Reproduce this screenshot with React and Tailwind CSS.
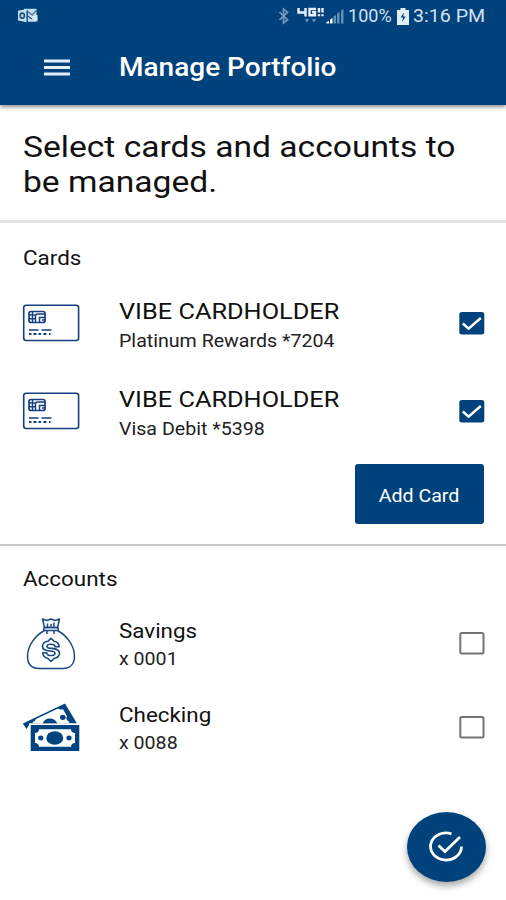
import React from "react";

const text = "block w-max origin-left scale-x-[1.12] whitespace-nowrap";

function CardIcon() {
  return (
    <svg className="h-[38px] w-[58px]" viewBox="0 0 58 38" fill="none" stroke="#153f80">
      <rect x="1.7" y="1.2" width="54.9" height="35.3" rx="2.5" strokeWidth="1.6" />
      <rect x="7" y="7.5" width="16" height="11" rx="2" strokeWidth="1.7" />
      <path d="M10.5 7.5v11M7 11h6M7 14.8h6M13.5 18.5V12q0-2 2-2h7.5M17.5 18.5v-5h5.5M20 16h3" strokeWidth="1.5" />
      <path d="M7 26h9.5M19.5 26h10" strokeWidth="1.5" />
      <path d="M7 30h2.5m2 0h3m2 0h2.5m2.5 0h3m2.5 0h1.5" strokeWidth="1.8" />
    </svg>
  );
}

function BagIcon() {
  return (
    <svg className="mt-0.5 h-[54px] w-[58px]" viewBox="0 0 58 54" fill="none" stroke="#174882" strokeWidth="1.5" strokeLinejoin="round">
      <path d="M22.5 13.5C14 18 5.5 28 5.5 39.500c0 8 4.500 12 12 12h23c7 0 12-4 12-12C52.500 28 44 18 35.500 13.500" />
      <path d="M22.5 10.5 20.5 2l4.500 1.500L29 2l4 1.500L37.500 2l-2 8.500zM25.500 10V6.500M29 9.500V7M32 9.500V5.500" />
      <rect x="21.8" y="10.5" width="14.4" height="3" rx="1" />
      <path d="M25 13.5v3.500M32 13.5v3.500" />
      <path d="M29 21.300l-3.200 3c-3.600.7-5.300 2.800-5.300 5 0 3.200 3 4.500 7.500 4.700 3.800.2 5 .9 5 2.200s-1.500 2.300-4 2.300-4-1-4.300-2.700h-4c.2 3 2.200 5 5.300 5.700l3 3 3-3c3.700-.7 5.500-2.900 5.500-5.200 0-3.300-3-4.600-7.700-4.900-3.500-.2-4.800-.8-4.800-2s1.400-2.200 3.900-2.200c2.600 0 4.100 1 4.300 2.600h4c-.2-3-2.200-4.900-5.200-5.500z" strokeWidth="1.6" />
    </svg>
  );
}

function CashIcon() {
  return (
    <svg className="h-[50px] w-[58px]" viewBox="0 0 58 50">
      <path d="M.8 20.5 43 .5 55 20.500H8L4.500 26z" fill="#004581" />
      <path d="M11.500 20.300 10.500 18.900a5 4 0 0 0 3.500-3L36 5.400a4.500 3.500 0 0 0 5 .8l4 7a4 3.500 0 0 0 1.500 5l1.300 2.200z" fill="#fff" />
      <path d="M20.500 20.800c2-7 12.500-7 15 0z" fill="#004581" />
      <ellipse cx="40.800" cy="14.300" rx="2.800" ry="2.600" fill="#004581" />
      <path d="M7 20.500H57V22H8.500v6H7z" fill="#fff" />
      <rect x="8.7" y="22" width="48.6" height="26" fill="#004581" />
      <path d="M17 26.200h32a4 4 0 0 0 4 3.800v10a4 4 0 0 0-4 3.800H17a4 4 0 0 0-4-3.800V30a4 4 0 0 0 4-3.800z" fill="#fff" />
      <ellipse cx="32.8" cy="35" rx="8.5" ry="6.8" fill="#004581" />
      <ellipse cx="18.8" cy="35" rx="2.6" ry="2.4" fill="#004581" />
      <ellipse cx="47" cy="35" rx="2.6" ry="2.4" fill="#004581" />
    </svg>
  );
}

function Checkbox({ checked }) {
  return checked ? (
    <svg className="h-[23px] w-[26px]" viewBox="0 0 26 23">
      <rect x=".3" y="0" width="25" height="22.6" rx="2.5" fill="#00427c" />
      <path d="m3.800 11.500 5.800 5.200L21.800 6" fill="none" stroke="#fff" strokeWidth="2.5" />
    </svg>
  ) : (
    <svg className="h-[23px] w-[26px]" viewBox="0 0 26 23">
      <rect x="1.3" y="1" width="23.2" height="20.6" rx="1.5" fill="none" stroke="#737373" strokeWidth="2" />
    </svg>
  );
}

function Row({ icon, title, detail, checked, large, className }) {
  return (
    <div className={"flex items-center pl-[22px] pr-[21px] " + className}>
      <div className="flex w-[97px] shrink-0 items-center">{icon}</div>
      <div className={large ? "flex-1 pt-[5px]" : "flex-1 pt-[3px]"}>
        <span className={text + (large ? " text-[22.6px] leading-[30px]" : " text-[20px] leading-7")}>{title}</span>
        <span className={text + " text-[17.5px] leading-7 text-[#222]"}>{detail}</span>
      </div>
      <Checkbox checked={checked} />
    </div>
  );
}

function StatusBar() {
  return (
    <div className="flex h-8 items-center justify-between pl-[18px] pr-5 text-[#d3e0ee]">
      <svg className="h-4 w-5" viewBox="0 0 20 16">
        <path d="M6 .8h12.500v13H6z" fill="#c4dcec" />
        <path d="m9 3 5 4 5-5M14 7l6 4" fill="none" stroke="#43749f" strokeWidth="1.3" />
        <path d="M0 2.800 9 1v13.200L0 12.500z" fill="#c4dcec" />
        <ellipse cx="4.3" cy="7.7" rx="2.1" ry="2.6" fill="none" stroke="#16528a" strokeWidth="1.6" />
        <path d="M9.200 2.500V14M10 8l4 3" stroke="#16528a" strokeWidth="1.5" />
        <path d="m11 8 8.500 5.500V7z" fill="#dcebf5" />
      </svg>
      <div className="flex h-8 items-center">
        <svg className="h-[18px] w-[68px]" viewBox="0 0 68 18">
          <path d="m1.500 5 8 8L5.500 16V2l4 3.200-8 7.800" fill="none" stroke="#739abd" strokeWidth="1.7" />
          <path d="M20.500 1v4.500h7.500M27.500 1v8.500M38 2h-6.500v6.300h5.500V5.200h-3M41 1v4.500M44.500 1v4.500M41 7.200v2M44.500 7.200v2" fill="none" stroke="#e8f0f8" strokeWidth="2.4" />
          <path d="M27.500 12.500h3L29 15zM34.500 12.500h3L36 15z" fill="#5f91bb" stroke="#5f91bb" />
          <path d="M48.500 16.500v-1.500l2.500-1v2.500zM52 16.500v-4l2.500-1.500v5.500z" fill="#fff" />
          <path d="M55.500 16.500V9.500L58 8v8.500zM59 16.500V6.500L61.500 5v11.500zM63 16.500V3.500L65.500 2v14.500z" fill="#6190b6" />
        </svg>
        <span className="block w-[51px] pl-0.5 text-[17.5px] leading-8">
          <span className="block w-max origin-left scale-x-[1.03]">100%</span>
        </span>
        <svg className="h-[17px] w-3" viewBox="0 0 12 17">
          <path d="M3.500 0h5v2H12v15H0V2h3.500z" fill="#e3edf6" />
          <path d="M7 4.500 3.500 9.500H6L5 14l3.800-5.500H6.300z" fill="#064680" />
        </svg>
        <span className="block w-[77px] pl-1">
          <span className={text + " text-[17.5px] leading-8"}>3:16 PM</span>
        </span>
      </div>
    </div>
  );
}

export default function App() {
  return (
    <div className="relative h-[900px] w-[506px] overflow-hidden bg-white font-['Roboto','Noto_Sans',sans-serif] text-[#111]">
      <header className="relative h-[105px] bg-[#00427c] shadow-[0_2px_4px_rgba(0,0,0,0.45)]">
        <StatusBar />
        <div className="flex h-[72px] items-center pl-11 text-white">
          <svg className="h-[18px] w-[26px]" viewBox="0 0 26 18" fill="#e4effb">
            <rect y=".5" width="26" height="3" />
            <rect y="7" width="26" height="3" />
            <rect y="13.5" width="26" height="3" />
          </svg>
          <h1 className={text + " ml-[49px] text-[25px] font-medium leading-8"}>Manage Portfolio</h1>
        </div>
      </header>

      <section className="h-[118px] border-b-[3px] border-[#e4e4e4] pl-[23px] pt-6">
        <h2 className={text + " text-[30px] leading-[35px]"}>
          Select cards and accounts to
          <br />
          be managed.
        </h2>
      </section>

      <section className="h-[323px] border-b-2 border-[#c8c8c8] pt-[21px]">
        <h3 className={text + " ml-[23px] text-[20px] leading-7"}>Cards</h3>
        <Row className="mt-[7px] h-[88px]" large checked icon={<CardIcon />} title="VIBE CARDHOLDER" detail="Platinum Rewards *7204" />
        <Row className="h-[88px]" large checked icon={<CardIcon />} title="VIBE CARDHOLDER" detail="Visa Debit *5398" />
        <div className="mt-[9px] flex justify-end pr-[22px]">
          <button className="flex h-[60px] w-[129px] items-center justify-center rounded-[3px] bg-[#00427c] pt-1 text-[17.5px] text-white">
            <span className="block scale-x-[1.12] whitespace-nowrap">Add Card</span>
          </button>
        </div>
      </section>

      <section className="pt-[19px]">
        <h3 className={text + " ml-[23px] text-[20px] leading-7"}>Accounts</h3>
        <Row className="mt-2 h-[84px]" icon={<BagIcon />} title="Savings" detail="x 0001" />
        <Row className="h-[85px]" icon={<CashIcon />} title="Checking" detail="x 0088" />
      </section>

      <button className="absolute left-[407px] top-[812px] flex h-[70px] w-[79px] items-center justify-center rounded-[50%] bg-[#00427c] shadow-[0_4px_7px_rgba(0,0,0,0.35)]">
        <svg className="h-8 w-9" viewBox="0 0 36 32" fill="none" stroke="#fff" strokeWidth="2.8">
          <path d="M22.5 2.900A15.500 13.500 0 1 0 32.500 15.500" />
          <path d="m9.500 14.500 6.500 6L31 6" />
        </svg>
      </button>
    </div>
  );
}
